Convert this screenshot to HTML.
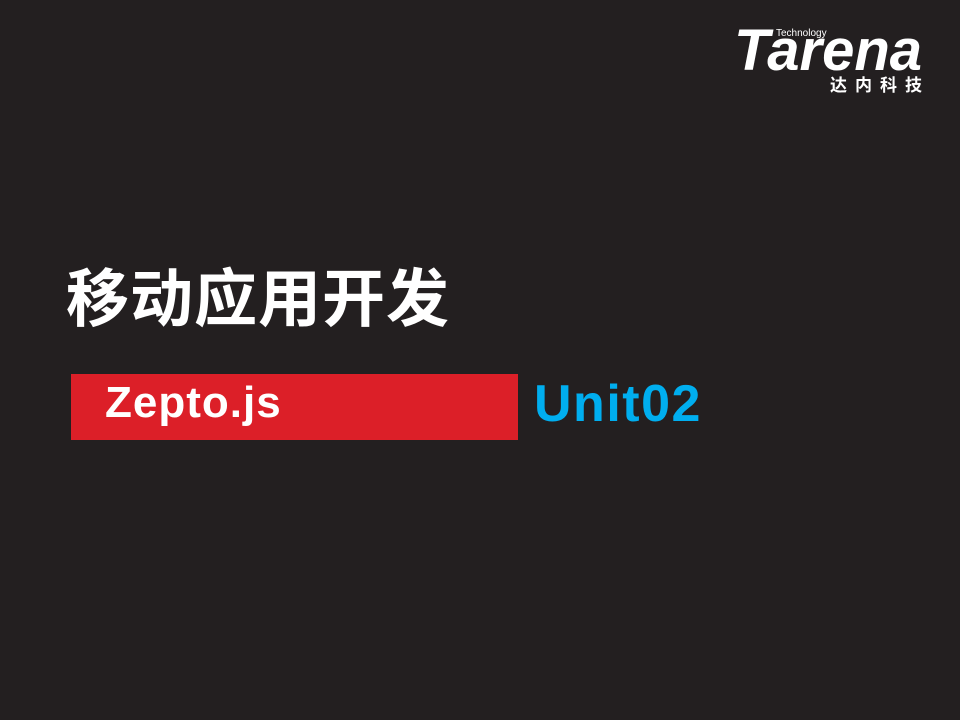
<!DOCTYPE html>
<html><head><meta charset="utf-8"><style>
body{margin:0;width:960px;height:720px;background:#231f20;position:relative;overflow:hidden;font-family:"Liberation Sans","Noto Sans CJK SC",sans-serif}
div{position:absolute;white-space:nowrap}
</style></head><body>
<div style="left:776px;top:28px;font-size:10px;color:#fff;">Technology</div>
<div style="left:734px;top:20px;font-size:58px;font-weight:bold;font-style:italic;color:#fff;letter-spacing:0px;line-height:62px;">Tarena</div>
<div style="left:830px;top:76px;font-size:17px;font-weight:bold;color:#fff;letter-spacing:8px;line-height:20px;">达内科技</div>
<div style="left:66px;top:262px;font-size:63px;font-weight:bold;color:#fff;line-height:76px;letter-spacing:1px;">移动应用开发</div>
<div style="left:71px;top:374px;width:447px;height:66px;background:#dc1f28;"></div>
<div style="left:105px;top:378px;font-size:44px;font-weight:bold;color:#fff;line-height:50px;letter-spacing:1px;">Zepto.js</div>
<div style="left:534px;top:376px;font-size:52px;font-weight:bold;color:#00aeef;line-height:56px;letter-spacing:1.5px;">Unit02</div>
</body></html>
